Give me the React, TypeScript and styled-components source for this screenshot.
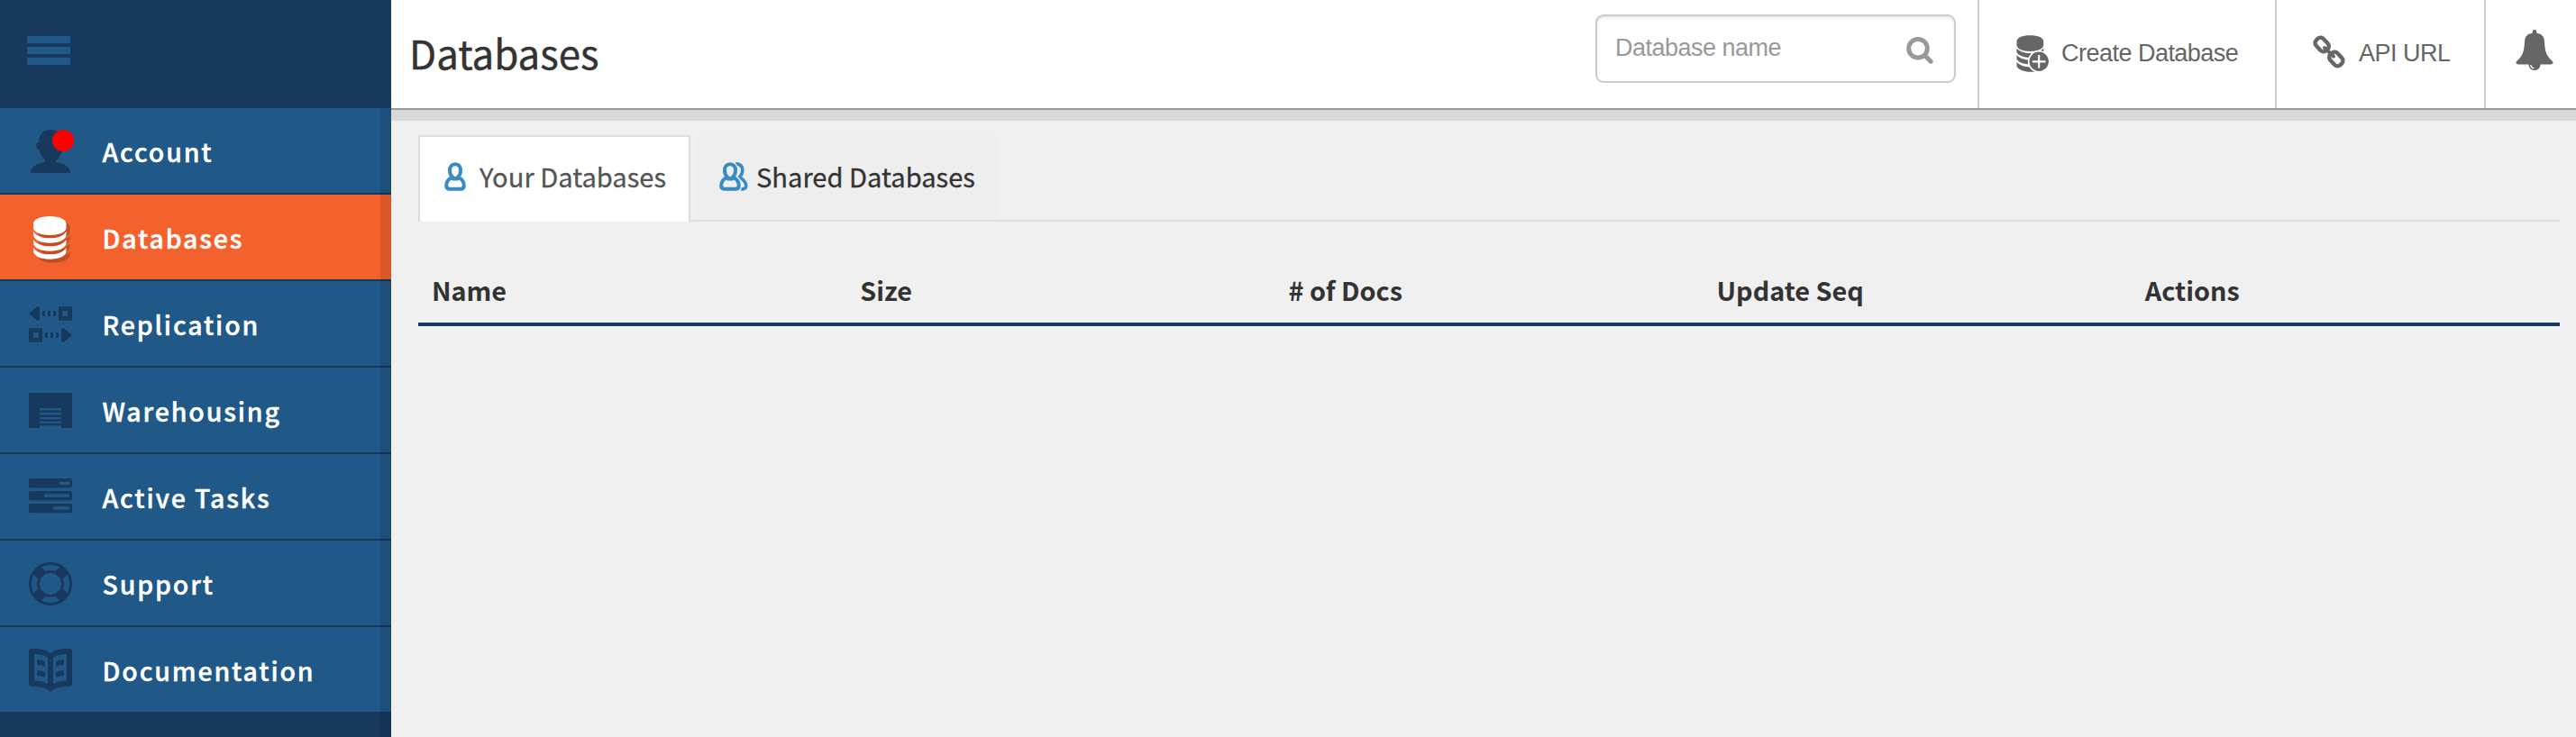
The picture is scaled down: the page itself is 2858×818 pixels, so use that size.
import React from 'react';
import styled, { createGlobalStyle } from 'styled-components';

const navy = '#17395e';
const blue = '#205887';
const orange = '#f3622d';
const sans = '"Noto Sans CJK SC", "Open Sans", sans-serif';
const helvetica = '"Liberation Sans", Arial, sans-serif';

const GlobalStyle = createGlobalStyle`
  html, body { margin: 0; padding: 0; }
  body { background: #f0f0f0; font-family: ${sans}; color: #333; }
  *, *::before, *::after { box-sizing: border-box; }
`;

const Page = styled.div`
  display: flex;
  height: 818px;
  overflow: hidden;
`;

/* ---------- sidebar ---------- */

const Sidebar = styled.nav`
  flex: 0 0 434px;
  display: flex;
  flex-direction: column;
  background: ${navy};
`;

const MenuToggle = styled.button`
  display: flex;
  flex-direction: column;
  align-items: flex-start;
  gap: 4px;
  height: 120px;
  padding: 40px 30px;
  border: 0;
  background: transparent;
`;

const ToggleBar = styled.span`
  width: 48px;
  height: 8px;
  background: ${blue};
`;

const NavBody = styled.div`
  position: relative;
  flex: 1;
  &::after {
    content: '';
    position: absolute;
    inset: 0 0 0 auto;
    width: 12px;
    background: rgba(0, 0, 0, 0.1);
  }
`;

const NavList = styled.ul`
  margin: 0;
  padding: 0;
  list-style: none;
`;

const NavItem = styled.li<{ $active?: boolean }>`
  display: flex;
  align-items: center;
  gap: 33.5px;
  height: 96px;
  padding-left: 32px;
  border-bottom: 2px solid ${navy};
  background: ${p => (p.$active ? orange : blue)};
  color: ${p => (p.$active ? '#fff' : navy)};
`;

const IconBox = styled.span`
  position: relative;
  flex: none;
  width: 48px;
  height: 48px;
  margin-top: 2px;
  svg { display: block; overflow: visible; }
`;

const AlertDot = styled.span`
  position: absolute;
  top: 0;
  left: 26px;
  width: 24px;
  height: 24px;
  border-radius: 50%;
  background: #f00;
`;

const NavLabel = styled.span`
  padding-top: 1px;
  color: #fff;
  font-size: 28.5px;
  font-weight: 500;
  line-height: 40px;
  letter-spacing: 1.85px;
  white-space: nowrap;
  -webkit-text-stroke: 0.4px #fff;
`;

/* ---------- header ---------- */

const Main = styled.main`
  flex: 1;
  min-width: 0;
  display: flex;
  flex-direction: column;
`;

const Header = styled.header`
  display: flex;
  height: 134px;
  border-bottom: 12px solid #d9d9d9;
`;

const HeaderInner = styled.div`
  flex: 1;
  display: flex;
  background: #fff;
  border-bottom: 2px solid #999;
`;

const Title = styled.h1`
  flex: 1;
  margin: 0;
  padding: 0 0 0 20px;
  font-size: 43.8px;
  font-weight: 400;
  line-height: 116px;
  -webkit-text-stroke: 0.4px #333;
`;

const SearchBox = styled.label`
  display: flex;
  align-items: center;
  justify-content: space-between;
  width: 400px;
  height: 76px;
  margin: 16px 24px 0 0;
  padding: 0 23px 0 20px;
  border: 2px solid #ccc;
  border-radius: 9px;
  box-shadow: inset 0 2px 3px rgba(0, 0, 0, 0.1);
  svg { margin-top: 3px; }
`;

const SearchInput = styled.input`
  width: 260px;
  padding: 0 0 2px;
  border: 0;
  outline: 0;
  background: transparent;
  font: 27px ${helvetica};
  letter-spacing: -0.5px;
  &::placeholder { color: #999; opacity: 1; }
`;

const HeaderAction = styled.button<{ $width: number; $pad: number; $gap: number; $lift?: number }>`
  display: flex;
  align-items: center;
  gap: ${p => p.$gap}px;
  width: ${p => p.$width}px;
  height: 120px;
  padding: 0 0 2px ${p => p.$pad}px;
  border: 0;
  border-left: 2px solid #ccc;
  background: transparent;
  color: #666;
  font: 27px ${helvetica};
  letter-spacing: -0.52px;
  white-space: nowrap;
  svg { flex: none; display: block; margin-bottom: ${p => p.$lift ?? 0}px; }
`;

/* ---------- content ---------- */

const Content = styled.section`
  padding: 16px 18px 0 30px;
`;

const Tabs = styled.div`
  display: flex;
  gap: 8px;
  height: 96px;
  box-shadow: inset 0 -2px 0 #ddd;
`;

const Tab = styled.div<{ $active?: boolean; $width: number; $gap: number }>`
  display: flex;
  align-items: center;
  gap: ${p => p.$gap}px;
  width: ${p => p.$width}px;
  height: ${p => (p.$active ? 96 : 94)}px;
  padding: ${p => (p.$active ? '0 0 4px 27px' : '0 0 0 24px')};
  border: solid #ddd;
  border-width: ${p => (p.$active ? '2px 2px 0' : 0)};
  background: ${p => (p.$active ? '#fff' : '#eee')};
  color: ${p => (p.$active ? '#555' : '#333')};
  font-size: 29.1px;
  white-space: nowrap;
  -webkit-text-stroke: 0.3px;
  svg { flex: none; display: block; margin-bottom: 2px; }
`;

const TabLabel = styled.span`
  line-height: 40px;
  padding-bottom: 5px;
`;

const Table = styled.table`
  width: 100%;
  margin-top: 32px;
  border-spacing: 0;
  table-layout: fixed;
`;

const Th = styled.th`
  height: 84px;
  padding: 7px 15px 0;
  border-bottom: 4px solid ${navy};
  text-align: left;
  font-size: 28.8px;
  font-weight: 700;
  line-height: 40px;
  vertical-align: middle;
`;

/* ---------- icons ---------- */

const AccountIcon = () => (
  <svg width="48" height="48" viewBox="0 0 48 48" fill="currentColor">
    <path d="M2 48C2 42 8 37.5 17 36C19 35.500 19 34.500 17.500 33C14.500 30.500 12.500 26.500 11.800 22.500C9.500 22 8 20 8 17.800C8 15.500 9.300 14 11 13.800C11 6 15.500 0 24 0C32.500 0 38 5 38 13C38 22 36 29 31 33.500C29.500 34.800 29.500 35.500 31 36C40 37.500 46 42 46 48Z" />
  </svg>
);

const diskBand = (d: number) =>
  `M5 ${17 + d}C9 ${22.5 + d} 15 ${24.3 + d} 23.2 ${24.3 + d}S37.5 ${22.5 + d} 41.5 ${17 + d}V${21 + d}C40.5 ${26.5 + d} 33 ${29.7 + d} 23.2 ${29.7 + d}S6 ${26.5 + d} 5 ${21 + d}Z`;

const stack =
  'M5 8.5C5 3.5 12.5 0 23.2 0C34 0 41.5 3.5 41.5 8.5V13C41.5 17.5 34 21 23.2 21C12.5 21 5 17.5 5 13Z' +
  [0, 9, 18].map(diskBand).join('');

const DatabasesIcon = () => (
  <svg width="48" height="48" viewBox="0 0 48 48">
    <path d={stack} fill="#000" opacity="0.2" transform="translate(4 4)" />
    <path d={stack} fill="#fff" />
  </svg>
);

const ReplicationIcon = () => (
  <svg width="48" height="48" viewBox="0 0 48 48" fill="currentColor" fillRule="evenodd">
    <path d="M0 12L9.500 4.300H12V19.700H9.500ZM15 9h3v6h-3ZM21 9h3v6h-3ZM27 9h3v6h-3ZM33 4.300H48V19.700H33ZM37.200 9V15H43.200V9Z" />
    <path d="M48 36L38.500 28.300H36V43.700H38.500ZM18 33h3v6h-3ZM24 33h3v6h-3ZM30 33h3v6h-3ZM0 28.300H15V43.700H0ZM4.800 33V39H10.800V33Z" />
  </svg>
);

const WarehouseIcon = () => (
  <svg width="48" height="48" viewBox="0 0 48 48" fill="currentColor" fillRule="evenodd">
    <path d="M0 4H48V43H36V40.300H12V43H0ZM12 21V23.600H36V21ZM12 26V28.300H36V26ZM12 31V33.300H36V31ZM12 35.700V38H36V35.700Z" />
  </svg>
);

const TasksIcon = () => (
  <svg width="48" height="48" viewBox="0 0 48 48" fill="currentColor">
    <rect y="3" width="48" height="10.600" rx="2" />
    <rect y="17" width="48" height="10.400" rx="2" />
    <rect y="31" width="48" height="10.200" rx="2" />
    <g fill={blue}>
      <rect x="34" y="6.700" width="11" height="3.300" />
      <rect x="17" y="20.400" width="28" height="3.400" />
      <rect x="27" y="34.200" width="18" height="3.400" />
    </g>
  </svg>
);

const SupportIcon = () => (
  <svg width="48" height="48" viewBox="0 0 48 48" fill="none" stroke="currentColor">
    <circle cx="24" cy="24" r="22.500" strokeWidth="3" />
    <circle cx="24" cy="24" r="13.500" strokeWidth="3" />
    <path strokeWidth="12" d="M15 15L9 9M33 15L39 9M15 33L9 39M33 33L39 39" />
  </svg>
);

const DocsIcon = () => (
  <svg width="48" height="48" viewBox="0 0 48 48" fill="currentColor" fillRule="evenodd">
    <path d="M3 0C14 0 21 1.500 24 5.500C27 1.500 34 0 45 0Q48 0 48 3V39Q48 42 45 42C34 42 27 44 24 48C21 44 14 42 3 42Q0 42 0 39V3Q0 0 3 0ZM6 6V35.500Q15 35.800 21 39V10Q16 6 6 6ZM42 6Q32 6 27 10V39Q33 35.800 42 35.500Z" />
    <path d="M9 12Q15 12 18 14.500V20Q15 18 9 18ZM9 24Q15 24 18 26.500V32Q15 30 9 30ZM39 12Q33 12 30 14.500V20Q33 18 39 18ZM39 24Q33 24 30 26.500V32Q33 30 39 30Z" />
  </svg>
);

const SearchIcon = () => (
  <svg width="30" height="30" viewBox="0 0 30 30" fill="none" stroke="#999">
    <circle cx="13" cy="12.800" r="10.300" strokeWidth="5" />
    <path d="M21 21L27.200 27.200" strokeWidth="5" strokeLinecap="round" />
  </svg>
);

const CreateIcon = () => (
  <svg width="37" height="41" viewBox="0 0 37 41" fill="#666">
    <path d="M0.500 7C0.500 3 6.500 0.300 15.300 0.300S30.200 3 30.200 7V11C30.200 15 24 18 15.300 18S0.500 15 0.500 11Z" />
    <path d="M0.500 14.500C4 18.500 9 20 15.300 20S26.500 18.500 30.200 14.500V19C28.500 22.500 22 24.800 15.300 24.800S2 22.500 0.500 19Z" />
    <path d="M0.500 22C4 26 9 27.500 15.300 27.500S26.500 26 30.200 22V26.500C28.500 30 22 32.400 15.300 32.400S2 30 0.500 26.500Z" />
    <path d="M0.500 29.800C4 33.800 9 35.300 15.300 35.300S26.500 34 30.200 29.800V34.500C28.500 38.500 22 40.800 15.300 40.800S2 38 0.500 34.500Z" />
    <circle cx="25.200" cy="29.200" r="11.500" stroke="#fff" strokeWidth="1.600" />
    <path d="M25.200 22V36.600M17.900 29.300H32.500" stroke="#fff" strokeWidth="2.200" />
  </svg>
);

const LinkIcon = () => (
  <svg width="36" height="37" viewBox="0 0 36 37" fill="none" stroke="#666" strokeWidth="4.400" strokeLinecap="round">
    <rect x="-8" y="-5.600" width="16" height="11.200" rx="4.600" transform="translate(10.200 10.500) rotate(47)" />
    <rect x="-8" y="-5.600" width="16" height="11.200" rx="4.600" transform="translate(25.800 26.500) rotate(47)" />
    <path d="M13 14L23 23.500" strokeWidth="4" />
  </svg>
);

const BellIcon = () => (
  <svg width="42" height="45" viewBox="0 0 42 45" fill="#666">
    <path d="M21 0C22.800 0 23.500 1.500 23.500 4C29 4.500 31.600 7.500 32 13C32.500 24 34 29 40.500 34.500C42.500 36.500 41.500 38.500 39 38.500H3C0.500 38.500 -0.500 36.500 1.500 34.500C8 29 9.500 24 10 13C10.400 7.500 13 4.500 18.500 4C18.500 1.500 19.200 0 21 0Z" />
    <path d="M14.500 38H27.500C27.500 42.500 24.500 45 21 45S14.500 42.500 14.500 38Z" />
    <path d="M16.700 39C17 41.300 18.400 42.600 20.300 42.900" fill="none" stroke="#fff" strokeWidth="1.300" />
  </svg>
);

const personOutline =
  'M12 2.200C15.800 2.200 18 5 18 9C18 12.500 16.800 15 15 16.600C19.500 18.500 21.800 22 21.800 26C21.800 28.500 20.500 29.800 18 29.800H6C3.500 29.800 2.200 28.500 2.200 26C2.200 22 4.500 18.500 9 16.600C7.200 15 6 12.500 6 9C6 5 8.200 2.200 12 2.200Z';

const PersonIcon = () => (
  <svg width="24" height="32" viewBox="0 0 24 32" fill="none" stroke="#388cc4" strokeWidth="4">
    <path d={personOutline} />
    <path d="M8 17.800Q12 19.300 16 17.800" />
  </svg>
);

const PeopleIcon = () => (
  <svg width="32" height="32" viewBox="0 0 32 32" fill="none" stroke="#388cc4" strokeWidth="4">
    <path d="M18 1.900C23 1.900 25.800 4.500 25.800 9C25.800 12 24.500 14.500 22.500 16.500C27 19.500 29.800 22.500 29.800 26C29.800 28.800 28 30 24 30" strokeWidth="3.600" />
    <path d={personOutline} stroke="#eee" strokeWidth="6.500" />
    <path d={personOutline} />
    <path d="M8 17.800Q12 19.300 16 17.800" />
  </svg>
);

const navItems = [
  { label: 'Account', icon: <AccountIcon />, alert: true },
  { label: 'Databases', icon: <DatabasesIcon />, active: true },
  { label: 'Replication', icon: <ReplicationIcon /> },
  { label: 'Warehousing', icon: <WarehouseIcon /> },
  { label: 'Active Tasks', icon: <TasksIcon /> },
  { label: 'Support', icon: <SupportIcon /> },
  { label: 'Documentation', icon: <DocsIcon /> },
];

const columns = ['Name', 'Size', '# of Docs', 'Update Seq', 'Actions'];

export default function App() {
  return (
    <Page>
      <GlobalStyle />
      <Sidebar>
        <MenuToggle aria-label="Toggle menu">
          <ToggleBar />
          <ToggleBar />
          <ToggleBar />
        </MenuToggle>
        <NavBody>
          <NavList>
            {navItems.map(item => (
              <NavItem key={item.label} $active={item.active}>
                <IconBox>
                  {item.icon}
                  {item.alert && <AlertDot />}
                </IconBox>
                <NavLabel>{item.label}</NavLabel>
              </NavItem>
            ))}
          </NavList>
        </NavBody>
      </Sidebar>
      <Main>
        <Header>
          <HeaderInner>
            <Title>Databases</Title>
            <SearchBox>
              <SearchInput placeholder="Database name" />
              <SearchIcon />
            </SearchBox>
            <HeaderAction $width={330} $pad={41} $gap={13}>
              <CreateIcon />
              Create Database
            </HeaderAction>
            <HeaderAction $width={232} $pad={40} $gap={15} $lift={3}>
              <LinkIcon />
              API URL
            </HeaderAction>
            <HeaderAction $width={102} $pad={33} $gap={0} $lift={7} aria-label="Notifications">
              <BellIcon />
            </HeaderAction>
          </HeaderInner>
        </Header>
        <Content>
          <Tabs>
            <Tab $active $width={302} $gap={15}>
              <PersonIcon />
              <TabLabel>Your Databases</TabLabel>
            </Tab>
            <Tab $width={332} $gap={9}>
              <PeopleIcon />
              <TabLabel>Shared Databases</TabLabel>
            </Tab>
          </Tabs>
          <Table>
            <thead>
              <tr>
                {columns.map(name => (
                  <Th key={name}>{name}</Th>
                ))}
              </tr>
            </thead>
          </Table>
        </Content>
      </Main>
    </Page>
  );
}
